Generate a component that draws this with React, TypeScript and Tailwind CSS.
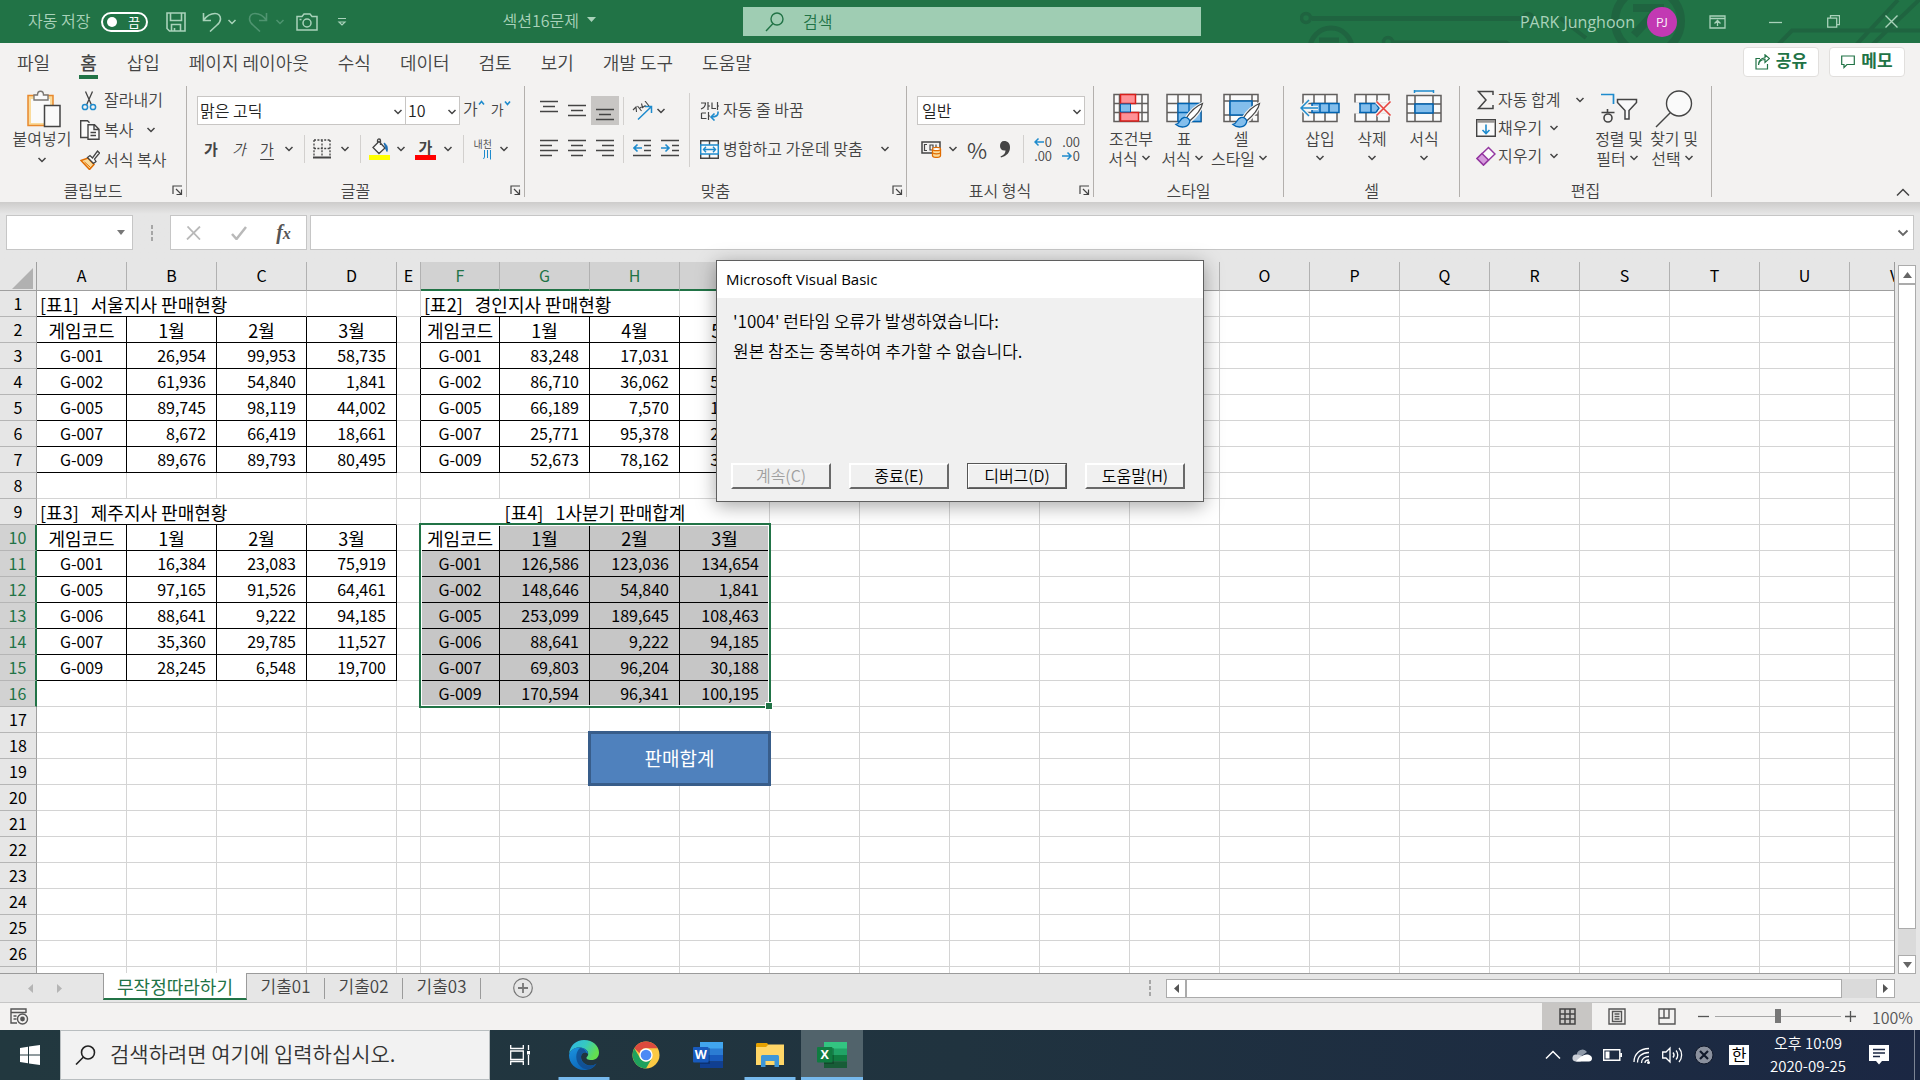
// Spreadsheet window with ribbon, worksheet, Visual Basic error dialog and the desktop taskbar.
import React from 'react';

type IconProps = { w: number; h: number; children: React.ReactNode; className?: string };

const Svg: React.FC<IconProps> = ({ w, h, children, className }) => (
  <svg
    width={w}
    height={h}
    viewBox={`0 0 ${w} ${h}`}
    fill="none"
    stroke="currentColor"
    className={`shrink-0 ${className ?? ''}`}
    aria-hidden="true"
  >
    {children}
  </svg>
);

const Chev: React.FC<{ className?: string }> = ({ className }) => (
  <Svg w={16} h={8} className={className}>
    <path d="M4.500 2l3.500 3.500L11.500 2" strokeWidth="1.5" />
  </Svg>
);

const DropBtn: React.FC<{ className?: string }> = ({ className }) => (
  <button type="button" aria-label="옵션" className={`h-6 w-4 flex items-center ${className ?? ''}`}>
    <Chev />
  </button>
);

const Sep: React.FC<{ className?: string }> = ({ className }) => (
  <span className={`w-px h-7 shrink-0 bg-[#d2d0ce] ${className ?? ''}`} />
);

/* Caption beside a small ribbon icon */
const Caption: React.FC<{ children: React.ReactNode }> = ({ children }) => <span className="pb-[3px]">{children}</span>;

/* ---------- Title bar ---------- */

const TitleBar: React.FC = () => (
  <header className="relative h-[43px] shrink-0 flex items-center bg-[#217346] text-[#a9d2ba] text-base overflow-hidden">
    <svg className="absolute right-0 top-0" width="620" height="43" fill="none" stroke="#1f6440" aria-hidden="true">
      <circle cx="6" cy="18" r="4.5" strokeWidth="3.5" />
      <path d="M12 18.5h212" strokeWidth="5" />
      <circle cx="228" cy="18" r="4.5" strokeWidth="3.5" />
      <circle cx="31" cy="49" r="21" strokeWidth="5" />
      <path d="M19 40h20" strokeWidth="5" />
      <circle cx="88" cy="42" r="4.5" strokeWidth="3.5" />
      <path d="M94 42.5h112l10 6M260 18l26 20" strokeWidth="4" />
      <circle cx="348" cy="21" r="33" strokeWidth="8" />
      <path d="M333 8h27v16M358 9l-24 26" strokeWidth="8" />
      <path d="M478 45l14-14.5h128M556 45l42-45M572 45l48-46" strokeWidth="4" />
    </svg>

    <div className="relative flex items-center w-[743px] shrink-0 pl-7">
      <span className="w-[73px] pb-1">자동 저장</span>
      <button
        type="button"
        role="switch"
        aria-checked="false"
        aria-label="자동 저장"
        className="w-[47px] h-5 rounded-full border-2 border-white flex items-center justify-between pl-1 pr-1.5 text-white text-[13px] leading-4 font-normal"
      >
        <span className="size-2.5 rounded-full bg-white" />끔
      </button>
      <button type="button" aria-label="저장" className="ml-[18px]">
        <Svg w={20} h={20}>
          <path d="M1 1h18v18H3.5L1 16.5zM4.500 1v7.500h11V1M5.500 19v-6.500h9V19M8.500 19v-3" strokeWidth="1.6" />
        </Svg>
      </button>
      <button type="button" aria-label="실행 취소" className="ml-4">
        <Svg w={20} h={20}>
          <path d="M1.5 1v7.5H9M1.8 8C5 3.500 9 1.500 13 1.500c3.500 0 5.500 2.500 5.500 5.500 0 2.500-1.500 4.500-4 6.500L8 19.500" strokeWidth="1.6" />
        </Svg>
      </button>
      <DropBtn className="ml-0.5" />
      <button type="button" aria-label="다시 실행" className="ml-2 text-[#4f9470]">
        <Svg w={20} h={20}>
          <path d="M18.5 1v7.5H11M18.2 8C15 3.500 11 1.500 7 1.500 3.500 1.500 1.500 4 1.500 7c0 2.500 1.500 4.500 4 6.500l6.500 6" strokeWidth="1.6" />
        </Svg>
      </button>
      <DropBtn className="ml-1 text-[#4f9470]" />
      <button type="button" aria-label="카메라" className="ml-2">
        <Svg w={22} h={18}>
          <path d="M1 3.500h5L8 1h6l2 2.500h5V17H1z" strokeWidth="1.5" />
          <circle cx="11" cy="10" r="4" strokeWidth="1.5" />
          <path d="M3.500 6.500h2" strokeWidth="1.5" />
        </Svg>
      </button>
      <button type="button" aria-label="빠른 실행 도구 모음" className="ml-[18px]">
        <Svg w={12} h={10}>
          <path d="M2 1.500h8M3 5l3 3 3-3z" strokeWidth="1.2" />
        </Svg>
      </button>
      <button type="button" className="ml-auto mr-[147px] flex items-center gap-2 pb-1">
        섹션16문제
        <Svg w={9} h={6}>
          <path d="M0 0h9L4.500 5z" fill="currentColor" stroke="none" />
        </Svg>
      </button>
    </div>

    <label className="relative flex items-center flex-1 max-w-[458px] h-[29px] bg-[#9fcdb3] text-[#217346] pl-[22px] gap-[18px]">
      <Svg w={20} h={20}>
        <circle cx="12" cy="7" r="6" strokeWidth="1.4" />
        <path d="M8 11.500L1 19" strokeWidth="1.4" />
      </Svg>
      <input
        type="text"
        placeholder="검색"
        aria-label="검색"
        className="w-full bg-transparent outline-none pb-0.5 placeholder:text-[#217346]"
      />
    </label>

    <div className="relative ml-auto flex items-center">
      <span className="[font-family:'Open_Sans',sans-serif] font-normal">PARK Junghoon</span>
      <span className="ml-3 mr-[11px] size-[30px] rounded-full bg-[#c239b3] text-white text-xs flex items-center justify-center">
        PJ
      </span>
      <button type="button" aria-label="리본 메뉴 표시 옵션" className="w-[58px] flex justify-center">
        <Svg w={17} h={14}>
          <path d="M1 1h15v12H1zM1 3.500h15M8.500 11V6M5.500 8.500l3-3 3 3" strokeWidth="1.3" />
        </Svg>
      </button>
      <button type="button" aria-label="최소화" className="w-[58px] flex justify-center">
        <Svg w={13} h={14}>
          <path d="M0 7.500h13" strokeWidth="1.3" />
        </Svg>
      </button>
      <button type="button" aria-label="이전 크기로 복원" className="w-[58px] flex justify-center">
        <Svg w={13} h={13}>
          <path d="M.7 3.200h9v9h-9zM3.500 3V.7h9v9H10" strokeWidth="1.3" />
        </Svg>
      </button>
      <button type="button" aria-label="닫기" className="w-[58px] flex justify-center">
        <Svg w={13} h={13}>
          <path d="M.5.5l12 12M12.500.5l-12 12" strokeWidth="1.4" />
        </Svg>
      </button>
    </div>
  </header>
);

/* ---------- Ribbon ---------- */

const MENU = ['파일', '홈', '삽입', '페이지 레이아웃', '수식', '데이터', '검토', '보기', '개발 도구', '도움말'];

const MenuRow: React.FC = () => (
  <nav className="flex items-start h-10 pl-[17px] pr-[15px] text-lg text-[#444]">
    <div className="flex gap-[29px] pt-[5px]">
      {MENU.map((m) => (
        <button
          key={m}
          type="button"
          className={`h-[31px] leading-[26px] border-b-4 whitespace-nowrap ${
            m === '홈' ? 'px-px border-[#217346] font-medium' : 'border-transparent'
          }`}
        >
          {m}
        </button>
      ))}
    </div>
    <div className="ml-auto flex gap-2.5 pt-1">
      <button type="button" className="flex items-center justify-center gap-1.5 w-[76px] h-[30px] bg-white border border-[#e1dfdd] rounded-sm text-[#217346] text-[17px] font-bold">
        <Svg w={15} h={16}>
          <path d="M5 4.500H1v10.500h11.500V10M3.500 11c.5-4 3-5.500 6.500-5.500v3l4.500-4L10 .8v3C6 4 3.500 7 3.500 11z" strokeWidth="1.2" />
        </Svg>
        <Caption>공유</Caption>
      </button>
      <button type="button" className="flex items-center justify-center gap-1.5 w-[76px] h-[30px] bg-white border border-[#e1dfdd] rounded-sm text-[#217346] text-[17px] font-bold">
        <Svg w={14} h={16}>
          <path d="M.7 2h12.600v8.500H6l-3 3v-3H.7z" strokeWidth="1.2" />
        </Svg>
        <Caption>메모</Caption>
      </button>
    </div>
  </nav>
);

type GroupProps = { label: string; className: string; launcher?: boolean; children: React.ReactNode };

const Group: React.FC<GroupProps> = ({ label, className, launcher, children }) => (
  <section className={`flex flex-col shrink-0 h-[111px] border-r border-[#b3b0ad] ${className}`}>
    <div className="flex h-[97px]">{children}</div>
    <div className="flex items-center h-3.5 leading-[14px]">
      <span className="w-3.5" />
      <span className="flex-1 text-center">{label}</span>
      <span className="w-3.5">
        {launcher && (
          <button type="button" aria-label={`${label} 설정`} className="block">
            <Svg w={11} h={10}>
              <path d="M1 9V1h9M4 4l5 5M9.500 4.500v5h-5" strokeWidth="1.2" />
            </Svg>
          </button>
        )}
      </span>
    </div>
  </section>
);

const BigButton: React.FC<{ icon: React.ReactNode; top: string; bottom?: string; className: string }> = ({
  icon,
  top,
  bottom,
  className,
}) => (
  <button type="button" className={`flex flex-col items-center pt-1 leading-5 whitespace-nowrap ${className}`}>
    <span className="h-[38px]">{icon}</span>
    <span>{top}</span>
    <span className="flex items-center h-5">
      {bottom}
      <Chev />
    </span>
  </button>
);

/* Grey cell grid shared by the table-like ribbon icons */
const GridBase: React.FC = () => (
  <path d="M3 4.500h34v27H3zM3 13.500h34M3 22.500h34M14 4.500v27M25 4.500v27" fill="#fafafa" stroke="#605e5c" strokeWidth="1.5" />
);

const Brush: React.FC = () => (
  <>
    <path d="M38.500 13.500c-5 2-12 8-17 15l4 3.500c6-5 12-12.500 13-18.500z" fill="#fff" stroke="#f3f2f1" strokeWidth="3" />
    <path d="M38.500 13.500c-5 2-12 8-16.500 15l3 3c6-5 12.500-12.500 13.500-18z" fill="#fff" stroke="#444" strokeWidth="1.3" />
    <path d="M12 34.500c4-.5 3.500-6 8-7 3.500-.5 6.500 2 5.500 5-1.500 5-9 6-13.500 2z" fill="#83beec" stroke="#0063b1" strokeWidth="1.3" />
  </>
);

const HLines: React.FC<{ rows: [number, number, number][] }> = ({ rows }) => (
  <Svg w={18} h={20}>
    {rows.map(([x1, x2, y]) => (
      <path key={y} d={`M${x1} ${y}.5H${x2}`} strokeWidth="1.5" />
    ))}
  </Svg>
);

const ClipboardGroup: React.FC = () => (
  <Group label="클립보드" className="w-[187px]" launcher>
    <button type="button" className="flex flex-col items-center ml-3 w-[60px] pt-1 leading-5 whitespace-nowrap">
      <Svg w={38} h={38}>
        <path d="M5 5.500h25v30H5z" fill="#fadb9b" stroke="#e8882c" strokeWidth="1.5" />
        <path d="M8 9h19v24H8z" fill="#fafafa" stroke="none" />
        <path d="M11 10V5h3.500c0-5 6-5 6 0H25v5z" fill="#fafafa" stroke="#797774" strokeWidth="1.4" />
        <path d="M21.500 15.500H37v21H21.500z" fill="#fafafa" stroke="#444" strokeWidth="1.5" />
      </Svg>
      <span>붙여넣기</span>
      <Chev className="mt-2" />
    </button>
    <div className="flex flex-col ml-2 whitespace-nowrap">
      <button type="button" className="flex items-center gap-1 h-[29px]">
        <Svg w={20} h={20}>
          <path d="M5.500.5l6 13.500M12.500.5l-6 13.500" strokeWidth="1.3" />
          <circle cx="5" cy="16" r="2.6" stroke="#1e8bcd" strokeWidth="1.5" />
          <circle cx="13" cy="16" r="2.6" stroke="#1e8bcd" strokeWidth="1.5" />
        </Svg>
        <Caption>잘라내기</Caption>
      </button>
      <button type="button" className="flex items-center gap-1 h-[30px]">
        <Svg w={20} h={20}>
          <path d="M7.500 17.500H.7V.7h6.800l2 2M8 4.700h6.500l4.500 4.500v10H8zM14 5v4.500h5M10.500 12.500H16M10.500 15.500H16" fill="#fafafa" strokeWidth="1.4" />
        </Svg>
        <Caption>복사</Caption>
        <Chev className="ml-1.5" />
      </button>
      <button type="button" className="flex items-center gap-1 h-[30px]">
        <Svg w={20} h={20}>
          <path d="M1 10.500L8 8l6 6.500-4.500 5z" fill="#fadb9b" stroke="#e06c00" strokeWidth="1.5" />
          <path d="M4.500 12l6 5.500" stroke="#e06c00" />
          <path d="M7.500 7.500l2.500-2 2.500 2.500L17.500 1l2 2-5 6 1.500 2.500-2.500 2z" fill="#fafafa" strokeWidth="1.3" />
        </Svg>
        <Caption>서식 복사</Caption>
      </button>
    </div>
  </Group>
);

const FontGroup: React.FC = () => (
  <Group label="글꼴" className="w-[338px]" launcher>
    <div className="pl-2.5 pt-2.5 flex flex-col gap-3">
      <div className="flex h-[29px]">
        <span className="relative w-[209px]">
          <select aria-label="글꼴" className="size-full appearance-none bg-white border border-[#c8c6c4] pl-0.5 pb-0.5 text-[#222]">
            <option>맑은 고딕</option>
          </select>
          <Chev className="absolute right-0 top-3 pointer-events-none" />
        </span>
        <span className="relative w-[55px] -ml-px">
          <select aria-label="글꼴 크기" className="size-full appearance-none bg-white border border-[#c8c6c4] pl-0.5 pb-0.5 text-[#222]">
            <option>10</option>
          </select>
          <Chev className="absolute right-0 top-3 pointer-events-none" />
        </span>
        <button type="button" aria-label="글꼴 크기 크게" className="flex items-start ml-[3px] text-base leading-6">
          가
          <Svg w={7} h={14}>
            <path d="M1 8.500l2.500-3 2.500 3" stroke="#1e8bcd" strokeWidth="1.6" />
          </Svg>
        </button>
        <button type="button" aria-label="글꼴 크기 작게" className="flex items-start ml-1.5 text-sm leading-[26px]">
          가
          <Svg w={7} h={14}>
            <path d="M1 5.500l2.500 3 2.500-3" stroke="#1e8bcd" strokeWidth="1.6" />
          </Svg>
        </button>
      </div>
      <div className="flex items-center h-6 text-[15px]">
        <button type="button" className="w-7 font-bold">가</button>
        <button type="button" className="w-7 italic">가</button>
        <button type="button" className="w-7 underline underline-offset-4">가</button>
        <DropBtn />
        <Sep className="ml-[7px]" />
        <button type="button" aria-label="테두리" className="ml-2">
          <Svg w={18} h={20}>
            <path d="M1 1h16M1 1v17M17 1v17M9 1v17M1 9.500h16" strokeWidth="1.3" strokeDasharray="2 1.4" />
            <path d="M0 18.500h18" strokeWidth="2" />
          </Svg>
        </button>
        <DropBtn className="ml-1.5" />
        <Sep className="ml-[7px]" />
        <button type="button" aria-label="채우기 색" className="ml-2">
          <Svg w={21} h={22}>
            <path d="M4 9.500l6-6 6 6.500-6 5.500zM8.500 6V2.500c0-2 3-2 3 0V7" fill="#fafafa" strokeWidth="1.3" />
            <path d="M15 5c3 1.500 4 4.500 3 8.500-1.500-2-1.500-5-3-8.500z" fill="#1e6fb5" stroke="#1e6fb5" />
            <path d="M0 19.500h21" stroke="#ffff00" strokeWidth="5" />
          </Svg>
        </button>
        <DropBtn className="ml-[3px]" />
        <button type="button" aria-label="글꼴 색" className="flex flex-col items-center w-[21px] ml-1.5 leading-[17px] font-bold">
          가
          <span className="w-full h-[5px] bg-[#ff0000]" />
        </button>
        <DropBtn className="ml-1" />
        <Sep className="ml-[7px]" />
        <button type="button" aria-label="윗주 필드" className="flex flex-col items-end w-5 ml-2 text-[10px] leading-[10px] whitespace-nowrap">
          내천
          <Svg w={9} h={11}>
            <path d="M1.500 1v7l-1 2M4.500 1v8M7.500 1v9.500" stroke="#1e8bcd" />
          </Svg>
        </button>
        <DropBtn className="ml-1" />
      </div>
    </div>
  </Group>
);

const AlignGroup: React.FC = () => (
  <Group label="맞춤" className="w-[382px]" launcher>
    <div className="pl-2.5 pt-2.5 flex flex-col gap-3">
      <div className="flex items-center h-[29px]">
        <button type="button" aria-label="위쪽 맞춤" className="w-7 h-full flex justify-center items-start pt-px">
          <HLines rows={[[0, 18, 4], [3, 15, 9], [0, 18, 14]]} />
        </button>
        <button type="button" aria-label="가운데 맞춤" className="w-7 h-full flex justify-center items-center">
          <HLines rows={[[0, 18, 4], [3, 15, 9], [0, 18, 14]]} />
        </button>
        <button type="button" aria-label="아래쪽 맞춤" aria-pressed="true" className="w-7 h-full flex justify-center items-end bg-[#c8c6c4]">
          <HLines rows={[[0, 18, 4], [3, 15, 9], [0, 18, 14]]} />
        </button>
        <Sep className="ml-1" />
        <button type="button" aria-label="방향" className="ml-2">
          <Svg w={21} h={20}>
            <path d="M6 18.500L19 6M13 5.500h6.500V12" stroke="#1e8bcd" strokeWidth="1.5" />
            <path d="M1 9l3-3 .5 5M5.500 5l4 5M7.500 7.500l2-1.500M9.500 2.500l1 4 3-2M13 0l4 5" strokeWidth="1.1" />
          </Svg>
        </button>
        <DropBtn />
      </div>
      <div className="flex items-center h-6">
        <button type="button" aria-label="왼쪽 맞춤" className="w-7 flex justify-center">
          <HLines rows={[[0, 18, 1], [0, 12, 6], [0, 18, 11], [0, 12, 16]]} />
        </button>
        <button type="button" aria-label="가로 가운데 맞춤" className="w-7 flex justify-center">
          <HLines rows={[[0, 18, 1], [3, 15, 6], [0, 18, 11], [3, 15, 16]]} />
        </button>
        <button type="button" aria-label="오른쪽 맞춤" className="w-7 flex justify-center">
          <HLines rows={[[0, 18, 1], [6, 18, 6], [0, 18, 11], [6, 18, 16]]} />
        </button>
        <Sep className="ml-1" />
        <button type="button" aria-label="내어쓰기" className="ml-1 w-7 flex justify-center">
          <Svg w={18} h={20}>
            <path d="M0 1.500h18M11 6.500h7M11 11.500h7M0 16.500h18" strokeWidth="1.5" />
            <path d="M1 9h8M4.500 5.500L1 9l3.500 3.500" stroke="#1e8bcd" strokeWidth="1.6" />
          </Svg>
        </button>
        <button type="button" aria-label="들여쓰기" className="w-7 flex justify-center">
          <Svg w={18} h={20}>
            <path d="M0 1.500h18M11 6.500h7M11 11.500h7M0 16.500h18" strokeWidth="1.5" />
            <path d="M0 9h8M4.500 5.500L8 9l-3.500 3.500" stroke="#1e8bcd" strokeWidth="1.6" />
          </Svg>
        </button>
      </div>
    </div>
    <span className="w-px h-[74px] mt-[7px] ml-[5px] bg-[#d2d0ce]" />
    <div className="pl-2.5 pt-2.5 flex flex-col gap-3 whitespace-nowrap">
      <button type="button" className="flex items-center gap-1 h-[29px]">
        <Svg w={19} h={20}>
          <path d="M1 2h4.500c0 3-1.500 5-4.500 6M8 1v8M8 5h2M12 1.500v6h4M17.500 1v8M19 5h-1.500M1.500 12v5.500h5M1.500 12H6M8.500 11v8M8.500 15H10" strokeWidth="1.2" />
          <path d="M18 10.500c.5 4-2 5.500-6.500 5.500M14.500 12.500L11 16l3.500 3.500" stroke="#1e8bcd" strokeWidth="1.6" />
        </Svg>
        <Caption>자동 줄 바꿈</Caption>
      </button>
      <div className="flex items-center h-6">
        <button type="button" className="flex items-center gap-1">
          <Svg w={19} h={19}>
            <path d="M.7.7h17.600v17.600H.7zM9.500.7v4M9.500 14v4" fill="#fafafa" strokeWidth="1.4" />
            <path d="M.7 5h17.600v9H.7z" fill="#fafafa" stroke="#1e8bcd" strokeWidth="1.5" />
            <path d="M3.500 9.500h12M6 6.800L3.500 9.500 6 12.200M13 6.800l2.500 2.700-2.500 2.700" stroke="#1e8bcd" strokeWidth="1.4" />
          </Svg>
          <Caption>병합하고 가운데 맞춤</Caption>
        </button>
        <DropBtn className="ml-3.5" />
      </div>
    </div>
  </Group>
);

const NumberGroup: React.FC = () => (
  <Group label="표시 형식" className="w-[187px]" launcher>
    <div className="pl-2.5 pt-2.5 flex flex-col gap-3">
      <span className="relative w-[168px] h-[29px]">
        <select aria-label="표시 형식" className="size-full appearance-none bg-white border border-[#c8c6c4] pl-1 pb-0.5 text-[#222]">
          <option>일반</option>
        </select>
        <Chev className="absolute right-0 top-3 pointer-events-none" />
      </span>
      <div className="flex items-center h-6">
        <button type="button" aria-label="회계 표시 형식" className="ml-1">
          <Svg w={21} h={18}>
            <path d="M1 2h18v11H1z" strokeWidth="1.5" />
            <path d="M6 4.500H3.500v6H6M9 5h3v5H9zM15 4.500v3" strokeWidth="1.2" />
            <path d="M11.500 9v6.500c0 2.500 8 2.500 8 0V9" fill="#fadb9b" stroke="#e06c00" strokeWidth="1.3" />
            <ellipse cx="15.5" cy="9" rx="4" ry="1.7" fill="#fff" stroke="#e06c00" strokeWidth="1.3" />
            <path d="M11.500 12.300c0 2 8 2 8 0" stroke="#e06c00" strokeWidth="1.2" />
          </Svg>
        </button>
        <DropBtn className="ml-[3px]" />
        <button type="button" aria-label="백분율 스타일" className="ml-1.5 w-5 text-[22px] leading-6">%</button>
        <button type="button" aria-label="쉼표 스타일" className="ml-3 w-3">
          <Svg w={12} h={18}>
            <path d="M5 1c4 0 6 2.500 6 6.500C11 12 8 16 2 17.500l-.5-1C5 15 6.500 13 6.500 10.500 3 11 1 9 1 6c0-3 1.500-5 4-5z" fill="currentColor" stroke="none" />
          </Svg>
        </button>
        <Sep className="ml-3" />
        <button type="button" aria-label="자릿수 늘림" className="ml-1.5 w-[22px] text-[13px] leading-[14px] text-right">
          <span className="flex items-center justify-end">
            <Svg w={11} h={10}>
              <path d="M1 5h9M4.500 1.500L1 5l3.500 3.500" stroke="#1e8bcd" strokeWidth="1.5" />
            </Svg>
            0
          </span>
          .00
        </button>
        <button type="button" aria-label="자릿수 줄임" className="ml-1.5 w-[22px] text-[13px] leading-[14px] text-right">
          .00
          <span className="flex items-center justify-end">
            <Svg w={11} h={10}>
              <path d="M0 5h9M5.500 1.500L9 5 5.500 8.500" stroke="#1e8bcd" strokeWidth="1.5" />
            </Svg>
            0
          </span>
        </button>
      </div>
    </div>
  </Group>
);

const StyleGroup: React.FC = () => (
  <Group label="스타일" className="w-[190px]">
    <BigButton
      className="ml-2.5 w-[54px]"
      top="조건부"
      bottom="서식"
      icon={
        <Svg w={40} h={38}>
          <path d="M3 4.500h34v27H3zM3 13.500h34M3 22.500h34M8.500 4.500v27M31 4.500v27" fill="#fafafa" stroke="#605e5c" strokeWidth="1.5" />
          <path d="M9.500 4.500h15v9h-15zM9.500 22.500h18V31h-18z" fill="#ff9196" stroke="#d8201c" strokeWidth="1.5" />
          <path d="M9.500 14h10v8h-10z" fill="#83beec" stroke="#0063b1" />
        </Svg>
      }
    />
    <BigButton
      className="w-[52px]"
      top="표"
      bottom="서식"
      icon={
        <Svg w={40} h={38}>
          <GridBase />
          <path d="M14 13.500h23v18H14zM25 13.500v18M14 22.500h23" fill="#83beec" stroke="#0063b1" strokeWidth="1.3" />
          <Brush />
        </Svg>
      }
    />
    <BigButton
      className="w-[62px]"
      top="셀"
      bottom="스타일"
      icon={
        <Svg w={40} h={38}>
          <path d="M3 4.500h34v27H3zM3 11h34M3 25h34M9 4.500v27M31 4.500v27" fill="#fafafa" stroke="#605e5c" strokeWidth="1.5" />
          <path d="M9 11h22v14H9z" fill="#83beec" stroke="#0063b1" strokeWidth="1.5" />
          <Brush />
        </Svg>
      }
    />
  </Group>
);

const CellGroup: React.FC = () => (
  <Group label="셀" className="w-[176px]">
    <BigButton
      className="ml-2.5 w-[52px]"
      top="삽입"
      icon={
        <Svg w={40} h={38}>
          <GridBase />
          <path d="M12 13.500h27v9H12zM20 13.500v9M29 13.500v9" fill="#83beec" stroke="#0063b1" strokeWidth="1.5" />
          <path d="M1 18h17M9 10l-8 8 8 8" stroke="#f3f2f1" strokeWidth="4" />
          <path d="M1 18h17M9 10l-8 8 8 8" stroke="#1e8bcd" strokeWidth="1.5" />
        </Svg>
      }
    />
    <BigButton
      className="w-[52px]"
      top="삭제"
      icon={
        <Svg w={40} h={38}>
          <GridBase />
          <path d="M1 12.500h6v11H1zM27 12.500h12v11H27z" fill="#f3f2f1" stroke="none" />
          <path d="M8 13.500h16l3 4.500-3 4.500H8zM19 13.500v9" fill="#83beec" stroke="#0063b1" strokeWidth="1.5" />
          <path d="M24.500 11.500l14 14M38.500 11.500l-14 14" stroke="#f3f2f1" strokeWidth="4" />
          <path d="M24.500 11.500l14 14M38.500 11.500l-14 14" stroke="#e8443f" strokeWidth="1.6" />
        </Svg>
      }
    />
    <BigButton
      className="w-[52px]"
      top="서식"
      icon={
        <Svg w={40} h={38}>
          <path d="M3 5.500h34v26H3zM3 14h34M3 23h34M11 5.500v26M29 5.500v26" fill="#fafafa" stroke="#605e5c" strokeWidth="1.5" />
          <path d="M11 14h18v9H11z" fill="#83beec" stroke="#0063b1" strokeWidth="1.5" />
          <path d="M10.500 1h19M10.500 0v3M29.500 0v3" stroke="#1e8bcd" strokeWidth="1.5" />
        </Svg>
      }
    />
  </Group>
);

const EditGroup: React.FC = () => (
  <Group label="편집" className="w-[252px]">
    <div className="flex flex-col ml-4 w-[115px] whitespace-nowrap">
      <button type="button" className="flex items-center h-7">
        <Svg w={20} h={20} className="mr-0.5">
          <path d="M17 5V1.500H2.500L10 10l-7.500 8.500H17V15" strokeWidth="1.5" />
        </Svg>
        <Caption>자동 합계</Caption>
        <Chev className="ml-3" />
      </button>
      <button type="button" className="flex items-center h-7">
        <Svg w={20} h={18} className="mr-0.5">
          <path d="M.7.7h18.600v16.600H.7z" fill="#fafafa" strokeWidth="1.4" />
          <path d="M1 2.500h18" strokeWidth="2.5" stroke="#979593" />
          <path d="M10 5.500v9M6.500 11l3.500 3.500 3.500-3.500" stroke="#1e8bcd" strokeWidth="1.6" />
        </Svg>
        <Caption>채우기</Caption>
        <Chev className="ml-1" />
      </button>
      <button type="button" className="flex items-center h-7">
        <Svg w={20} h={20} className="mr-0.5">
          <path d="M1 12.500L12.500 1.500 19 8 7.500 19z" fill="#fafafa" stroke="#9437a0" strokeWidth="1.5" />
          <path d="M1 12.500l5-5 6.500 6.500-5 5z" fill="#d59bdd" stroke="#9437a0" strokeWidth="1.5" />
        </Svg>
        <Caption>지우기</Caption>
        <Chev className="ml-1" />
      </button>
    </div>
    <BigButton
      className="w-[56px]"
      top="정렬 및"
      bottom="필터"
      icon={
        <Svg w={40} h={38}>
          <path d="M2 4.500h12.500V14" stroke="#1e8bcd" strokeWidth="1.7" />
          <path d="M8.500 19v3M2.500 22.500h13" strokeWidth="1.6" />
          <circle cx="9" cy="28" r="4" strokeWidth="1.6" />
          <path d="M18.500 9.500h19v3l-7.500 8V29h-4v-8.500l-7.500-8z" fill="#fafafa" strokeWidth="1.5" />
        </Svg>
      }
    />
    <BigButton
      className="w-[54px]"
      top="찾기 및"
      bottom="선택"
      icon={
        <Svg w={40} h={38}>
          <circle cx="25" cy="13.5" r="12.5" fill="#fafafa" strokeWidth="1.4" />
          <path d="M16.500 22.500L2 37" strokeWidth="1.5" />
        </Svg>
      }
    />
  </Group>
);

const Ribbon: React.FC = () => (
  <div className="shrink-0 h-[159px] bg-[#f3f2f1] text-[#444] text-base">
    <MenuRow />
    <div className="flex pt-[3px]">
      <ClipboardGroup />
      <FontGroup />
      <AlignGroup />
      <NumberGroup />
      <StyleGroup />
      <CellGroup />
      <EditGroup />
      <button type="button" aria-label="리본 메뉴 축소" className="ml-auto mr-2.5 self-end">
        <Svg w={14} h={9}>
          <path d="M1 7.500l6-6 6 6" strokeWidth="1.5" />
        </Svg>
      </button>
    </div>
  </div>
);

/* ---------- Formula bar ---------- */

const Dots: React.FC = () => (
  <Svg w={4} h={16} className="text-[#a6a6a6]">
    <path d="M2 0v4M2 6v4M2 12v4" strokeWidth="2" />
  </Svg>
);

const FormulaBar: React.FC = () => (
  <div className="shrink-0 h-[60px] flex pt-[13px] px-1.5 bg-linear-to-b from-[#cdcccb] to-[#e6e6e6] to-20%">
    <div className="flex items-center w-[127px] h-[35px] bg-white border border-[#c6c6c6]">
      <input type="text" aria-label="이름 상자" className="w-full h-full outline-none px-2" />
      <Svg w={8} h={5} className="mr-[7px] text-[#777]">
        <path d="M0 0h8L4 5z" fill="currentColor" stroke="none" />
      </Svg>
    </div>
    <span className="w-[37px] h-[35px] flex items-center justify-center">
      <Dots />
    </span>
    <div className="flex items-center w-[137px] h-[35px] bg-white border border-[#c6c6c6] text-[#b9b9b9]">
      <button type="button" aria-label="취소" className="flex-1 flex justify-center">
        <Svg w={16} h={14}>
          <path d="M1.500.5L14 13.500M14 .5L1 13.500" strokeWidth="1.8" />
        </Svg>
      </button>
      <button type="button" aria-label="입력" className="flex-1 flex justify-center">
        <Svg w={16} h={14}>
          <path d="M1 8l4.500 5L15 1" strokeWidth="2.5" />
        </Svg>
      </button>
      <button type="button" aria-label="함수 삽입" className="flex-1 text-[#555] italic font-bold text-xl leading-6 [font-family:'Liberation_Serif',serif]">
        f<span className="text-base">x</span>
      </button>
    </div>
    <div className="flex items-center flex-1 ml-[3px] h-[35px] bg-white border border-[#c6c6c6] text-[#666]">
      <input type="text" aria-label="수식 입력줄" className="w-full h-full outline-none px-2" />
      <Svg w={12} h={8} className="mr-1">
        <path d="M1.500 1.500L6 6l4.500-4.500" strokeWidth="1.8" />
      </Svg>
    </div>
  </div>
);

/* ---------- Worksheet ---------- */

const COLS = 'ABCDEFGHIJKLMNOPQRSTUV'.split('');
const ROWS = Array.from({ length: 27 }, (_, i) => i + 1);

const RANGES = [
  { col: 0, row: 2, data: [
    ['게임코드', '1월', '2월', '3월'],
    ['G-001', '26,954', '99,953', '58,735'],
    ['G-002', '61,936', '54,840', '1,841'],
    ['G-005', '89,745', '98,119', '44,002'],
    ['G-007', '8,672', '66,419', '18,661'],
    ['G-009', '89,676', '89,793', '80,495'],
  ] },
  { col: 5, row: 2, data: [
    ['게임코드', '1월', '4월', '5월'],
    ['G-001', '83,248', '17,031', '9,140'],
    ['G-002', '86,710', '36,062', '54,210'],
    ['G-005', '66,189', '7,570', '10,344'],
    ['G-007', '25,771', '95,378', '26,850'],
    ['G-009', '52,673', '78,162', '30,476'],
  ] },
  { col: 0, row: 10, data: [
    ['게임코드', '1월', '2월', '3월'],
    ['G-001', '16,384', '23,083', '75,919'],
    ['G-005', '97,165', '91,526', '64,461'],
    ['G-006', '88,641', '9,222', '94,185'],
    ['G-007', '35,360', '29,785', '11,527'],
    ['G-009', '28,245', '6,548', '19,700'],
  ] },
  { col: 5, row: 10, data: [
    ['게임코드', '1월', '2월', '3월'],
    ['G-001', '126,586', '123,036', '134,654'],
    ['G-002', '148,646', '54,840', '1,841'],
    ['G-005', '253,099', '189,645', '108,463'],
    ['G-006', '88,641', '9,222', '94,185'],
    ['G-007', '69,803', '96,204', '30,188'],
    ['G-009', '170,594', '96,341', '100,195'],
  ] },
];

const TITLES: Record<string, { text: string; span: number; center?: boolean }> = {
  A1: { text: '[표1]   서울지사 판매현황', span: 3 },
  F1: { text: '[표2]   경인지사 판매현황', span: 3 },
  A9: { text: '[표3]   제주지사 판매현황', span: 3 },
  F9: { text: '[표4]   1사분기 판매합계', span: 4, center: true },
};

const valueAt = (col: number, row: number): string | undefined => {
  for (const r of RANGES) {
    const v = r.data[row - r.row]?.[col - r.col];
    if (v) return v;
  }
  return undefined;
};

const inSelection = (col: number, row: number) => col >= 5 && col <= 8 && row >= 10 && row <= 16;

const GridRow: React.FC<{ row: number }> = ({ row }) => {
  const cells: React.ReactNode[] = [];
  for (let c = 0; c < COLS.length; c++) {
    const title = TITLES[COLS[c] + row];
    const span = title?.span ?? 1;
    const last = c + span - 1;
    const value = valueAt(c, row);
    const right = value || valueAt(last + 1, row) ? 'border-r-black' : 'border-r-[#d4d4d4]';
    const bottom = value || valueAt(c, row + 1) ? 'border-b-black' : 'border-b-[#d4d4d4]';
    const numeric = value !== undefined && /^[\d,]+$/.test(value);
    const code = value !== undefined && value.startsWith('G-');
    const fill = inSelection(c, row) && !(c === 5 && row === 10) ? 'bg-[#c6c6c6]' : '';
    cells.push(
      <td
        key={c}
        colSpan={span}
        className={`h-[26px] p-0 border-r border-b whitespace-pre overflow-hidden ${right} ${bottom} ${fill} ${
          numeric ? 'text-right pr-2.5 text-base leading-[25px]' : ''
        } ${code ? 'text-center text-base leading-[25px]' : ''} ${
          !numeric && !code ? 'text-lg leading-[24px]' : ''
        } ${title && !title.center ? 'pl-[3px]' : 'text-center'}`}
      >
        {title?.text ?? value}
      </td>
    );
    c = last;
  }
  const active = row >= 10 && row <= 16;
  return (
    <tr>
      <th
        scope="row"
        className={`h-[26px] p-0 border-b text-base leading-[25px] font-normal ${
          active
            ? 'bg-[#d2d2d2] border-b-[#b5b5b5] text-[#217346] border-r-2 border-r-[#217346]'
            : 'bg-[#e6e6e6] border-b-[#b5b5b5] border-r border-r-[#9f9f9f]'
        }`}
      >
        {row < 27 ? row : null}
      </th>
      {cells}
    </tr>
  );
};

const colWidth = (name: string) => {
  if (name === 'E') return 'w-[24px]';
  if (name === 'F') return 'w-[79px]';
  return 'w-[90px]';
};

const Worksheet: React.FC = () => (
  <div className="flex flex-1 min-h-0 bg-[#e6e6e6] font-normal">
    <main className="relative flex-1 min-w-0 overflow-hidden border-r border-b border-[#9b9b9b] text-black">
      <table className="table-fixed w-[1940px] border-separate border-spacing-0 bg-white">
        <colgroup>
          <col className="w-[37px]" />
          {COLS.map((c) => (
            <col key={c} className={colWidth(c)} />
          ))}
        </colgroup>
        <thead>
          <tr>
            <th aria-label="모두 선택" className="h-[29px] p-0 bg-[#e6e6e6] border-r border-b border-[#9f9f9f]">
              <Svg w={21} h={21} className="ml-3 mt-1">
                <path d="M21 0v21H0z" fill="#b1b1b1" stroke="none" />
              </Svg>
            </th>
            {COLS.map((c, i) => (
              <th
                key={c}
                scope="col"
                className={`h-[29px] p-0 pb-0.5 text-base leading-6 font-normal border-r border-r-[#b1b1b1] ${
                  i >= 5 && i <= 8
                    ? 'bg-[#d2d2d2] text-[#217346] border-b-2 border-b-[#217346]'
                    : 'bg-[#e6e6e6] border-b border-b-[#9f9f9f]'
                }`}
              >
                {c}
              </th>
            ))}
          </tr>
        </thead>
        <tbody>
          {ROWS.map((r) => (
            <GridRow key={r} row={r} />
          ))}
        </tbody>
      </table>

      {/* Selection frame around F10:I16 */}
      <div className="absolute left-[419px] top-[261px] w-[352px] h-[185px] border-2 border-[#217346] pointer-events-none">
        <div className="size-full border border-white" />
        <span className="absolute -right-[3px] -bottom-[3px] size-[6px] bg-[#217346] outline outline-white" />
      </div>

      {/* Macro button placed over H18:I19 */}
      <button
        type="button"
        className="absolute left-[588px] top-[469px] w-[183px] h-[55px] bg-[#4f81bd] border-[3px] border-[#385d8a] text-white text-[19px]"
      >
        판매합계
      </button>
    </main>

    <div className="w-[25px] pl-[3px] pr-1 pt-[3px] flex flex-col text-[#666]">
      <button type="button" aria-label="위로 스크롤" className="h-[19px] bg-white border border-[#ababab] flex items-center justify-center">
        <Svg w={9} h={6}>
          <path d="M0 6h9L4.500 0z" fill="currentColor" stroke="none" />
        </Svg>
      </button>
      <div className="flex-1 bg-[#dadada] pb-[26px]">
        <div className="h-full bg-white border border-[#ababab]" />
      </div>
      <button type="button" aria-label="아래로 스크롤" className="h-[19px] bg-white border border-[#ababab] flex items-center justify-center">
        <Svg w={9} h={6}>
          <path d="M0 0h9L4.500 6z" fill="currentColor" stroke="none" />
        </Svg>
      </button>
    </div>
  </div>
);

/* ---------- Sheet tabs and status bar ---------- */

const SheetTabs: React.FC = () => (
  <div className="shrink-0 h-[29px] flex items-start bg-[#e6e6e6] border-b border-[#c6c6c6] text-[#444]">
    <div className="flex items-center gap-6 w-[103px] h-7 pl-7 text-[#b5b5b5]">
      <Svg w={5} h={9}>
        <path d="M5 0v9L0 4.500z" fill="currentColor" stroke="none" />
      </Svg>
      <Svg w={5} h={9}>
        <path d="M0 0v9l5-4.500z" fill="currentColor" stroke="none" />
      </Svg>
    </div>
    <button type="button" className="relative w-[144px] h-[27px] -mt-px bg-white border-x border-[#9b9b9b] border-b-2 border-b-[#217346] text-[#217346] text-lg leading-[22px] font-normal">
      무작정따라하기
    </button>
    {['기출01', '기출02', '기출03'].map((t) => (
      <button key={t} type="button" className="w-[78px] h-[21px] mt-1 border-r border-[#9b9b9b] text-[17px] leading-[16px] flex justify-center">
        {t}
      </button>
    ))}
    <button type="button" aria-label="새 시트" className="ml-8 mt-1">
      <Svg w={20} h={20} className="text-[#777]">
        <circle cx="10" cy="10" r="9.3" strokeWidth="1.2" />
        <path d="M10 5v10M5 10h10" strokeWidth="1.8" />
      </Svg>
    </button>
    <div className="ml-auto mr-[25px] flex items-center h-7 text-[#555]">
      <Dots />
      <button type="button" aria-label="왼쪽으로 스크롤" className="ml-3.5 w-5 h-[19px] bg-white border border-[#ababab] flex items-center justify-center">
        <Svg w={5} h={9}>
          <path d="M5 0v9L0 4.500z" fill="currentColor" stroke="none" />
        </Svg>
      </button>
      <div className="w-[690px] h-[19px] bg-[#dadada] pr-[34px]">
        <div className="h-full bg-white border border-[#ababab]" />
      </div>
      <button type="button" aria-label="오른쪽으로 스크롤" className="w-[19px] h-[19px] bg-white border border-[#ababab] flex items-center justify-center">
        <Svg w={5} h={9}>
          <path d="M0 0v9l5-4.500z" fill="currentColor" stroke="none" />
        </Svg>
      </button>
    </div>
  </div>
);

const StatusBar: React.FC = () => (
  <div className="shrink-0 h-[27px] flex items-center bg-[#f3f2f1] text-[#555] text-base">
    <button type="button" aria-label="매크로 기록" className="ml-2.5">
      <Svg w={19} h={17}>
        <path d="M7 15H1V1h15v4M1 4.500h15M3.500 8h3M3.500 11h3" strokeWidth="1.4" />
        <circle cx="12.5" cy="11" r="5" strokeWidth="1.4" />
        <circle cx="12.5" cy="11" r="2.4" fill="currentColor" stroke="none" />
      </Svg>
    </button>
    <div className="ml-auto flex items-center h-full">
      <button type="button" aria-label="기본" aria-pressed="true" className="w-[50px] h-full bg-[#c8c6c4] flex items-center justify-center text-[#444]">
        <Svg w={17} h={17}>
          <path d="M1 1h15v15H1zM1 6h15M1 11h15M6 1v15M11 1v15" strokeWidth="1.5" />
        </Svg>
      </button>
      <button type="button" aria-label="페이지 레이아웃" className="w-[50px] flex justify-center">
        <Svg w={18} h={17}>
          <path d="M1 1h16v15H1zM4.500 3.500h9v10h-9zM6.500 6h5M6.500 8.500h5M6.500 11h5" strokeWidth="1.4" />
        </Svg>
      </button>
      <button type="button" aria-label="페이지 나누기 미리 보기" className="w-[50px] flex justify-center">
        <Svg w={18} h={17}>
          <path d="M1 1h16v15H1zM1 10h10V1M6 1v9" strokeWidth="1.4" />
        </Svg>
      </button>
      <button type="button" aria-label="축소" className="ml-1.5">
        <Svg w={11} h={11}>
          <path d="M0 5.500h11" strokeWidth="1.3" />
        </Svg>
      </button>
      <input
        type="range"
        aria-label="확대/축소"
        min={0}
        max={200}
        defaultValue={100}
        className="ml-1.5 w-[126px] h-4 appearance-none bg-transparent [&::-webkit-slider-runnable-track]:h-px [&::-webkit-slider-runnable-track]:bg-[#a6a6a6] [&::-webkit-slider-thumb]:appearance-none [&::-webkit-slider-thumb]:w-1.5 [&::-webkit-slider-thumb]:h-3.5 [&::-webkit-slider-thumb]:-mt-[7px] [&::-webkit-slider-thumb]:bg-[#777]"
      />
      <button type="button" aria-label="확대" className="ml-1">
        <Svg w={11} h={11}>
          <path d="M0 5.500h11M5.500 0v11" strokeWidth="1.3" />
        </Svg>
      </button>
      <button type="button" className="ml-4 w-12 text-left">100%</button>
    </div>
  </div>
);

/* ---------- Visual Basic error dialog ---------- */

const BTN = 'w-[100px] h-[26px] text-base leading-5 pb-0.5 bg-[#f0f0f0] border-t-white border-l-white border-r-[#696969] border-b-[#696969]';

const ErrorDialog: React.FC = () => (
  <div
    role="dialog"
    aria-labelledby="vb-title"
    className="absolute left-1/2 -translate-x-1/2 top-[260px] w-[488px] h-[242px] flex flex-col bg-[#f0f0f0] border border-[#5f5f5f] shadow-[0_4px_18px_rgba(0,0,0,0.35)] text-black"
  >
    <h2 id="vb-title" className="h-[37px] leading-[36px] pl-[9px] bg-white text-[15px] font-normal [font-family:'Open_Sans',sans-serif]">
      Microsoft Visual Basic
    </h2>
    <div className="flex-1 pl-4 pt-2 text-[17px] leading-[30px]">
      <p>'1004' 런타임 오류가 발생하였습니다:</p>
      <p>원본 참조는 중복하여 추가할 수 없습니다.</p>
    </div>
    <div className="flex gap-[18px] pl-3.5 pb-3">
      <button type="button" disabled className={`${BTN} border-2 text-[#a0a0a0]`}>계속(C)</button>
      <button type="button" className={`${BTN} border-2`}>종료(E)</button>
      <button type="button" className={`${BTN} border-2 outline -outline-offset-1 outline-[#555]`}>디버그(D)</button>
      <button type="button" className={`${BTN} border-2`}>도움말(H)</button>
    </div>
  </div>
);

/* ---------- Taskbar ---------- */

const EdgeLogo: React.FC = () => (
  <svg width="30" height="30" viewBox="0 0 30 30" aria-hidden="true">
    <defs>
      <linearGradient id="edge-top" x1="0" y1="0" x2="1" y2="0.4">
        <stop offset="0" stopColor="#2fb5e8" />
        <stop offset="0.55" stopColor="#36c9c0" />
        <stop offset="1" stopColor="#63e04f" />
      </linearGradient>
      <linearGradient id="edge-low" x1="0" y1="0" x2="0.6" y2="1">
        <stop offset="0" stopColor="#1b93e0" />
        <stop offset="1" stopColor="#0b63b5" />
      </linearGradient>
    </defs>
    <path d="M0 14C1 5.500 7 0 15 0c9 0 15 6 15 12.500 0 5-3.500 7.500-7.500 7.500-4 0-5.500-1.500-5-2.500 1.500-1.500 2-3 1.500-5C18 9 14 7.500 10 7.500 5.500 7.500 2 10 0 14z" fill="url(#edge-top)" />
    <path d="M0 15C1 10 5.500 7.500 10 7.500c5 0 9 2.500 9 6.500-1-2-5-2.500-6.500.5-2 5 2.500 11 9 11 2.500 0 4.500-1 6-2C25 28 20.500 30 15 30 6 30 0 23 0 15z" fill="url(#edge-low)" />
    <path d="M11 8c-5 4.500-5 13 0 18 2.500 2.500 6 4 9 3 3.500-1 6-3.500 7.500-5.500-2 1-4 2-6.500 2-6.500 0-10.500-6-8.500-11 1-2 3-2.500 5-1.500-1-3.500-3-5-6.500-5z" fill="#114a8b" opacity="0.8" />
  </svg>
);

const ChromeLogo: React.FC = () => (
  <svg width="28" height="28" viewBox="0 0 28 28" aria-hidden="true">
    <circle cx="14" cy="14" r="13.5" fill="#fbc943" />
    <path d="M2.300 7.300A13.500 13.500 0 0 1 25.700 7.300H14a6.700 6.700 0 0 0-6.500 5z" fill="#dd4b3e" />
    <path d="M2.300 7.300A13.500 13.500 0 0 0 14 27.500l5.800-10.200c-3 4.500-9.500 4-11.600 0z" fill="#1fa15d" />
    <circle cx="14" cy="14" r="6.7" fill="#fff" />
    <circle cx="14" cy="14" r="5.3" fill="#4c8bf5" />
  </svg>
);

type OfficeProps = { letter: string; bands: [string, string, string, string]; tile: string };

const OfficeLogo: React.FC<OfficeProps> = ({ letter, bands, tile }) => (
  <svg width="30" height="26" viewBox="0 0 30 26" aria-hidden="true">
    <rect x="7" width="23" height="7" fill={bands[0]} />
    <rect x="7" y="6.5" width="23" height="6.5" fill={bands[1]} />
    <rect x="7" y="13" width="23" height="6.5" fill={bands[2]} />
    <rect x="7" y="19.5" width="23" height="6.5" fill={bands[3]} />
    <rect x="7" y="6" width="10" height="16" fill="#000" opacity="0.2" />
    <rect y="5" width="15.5" height="15.5" rx="1" fill={tile} />
    <text x="7.7" y="17.2" textAnchor="middle" fontSize="12.5" fontWeight="700" fill="#fff" className="[font-family:'Open_Sans',sans-serif]">
      {letter}
    </text>
  </svg>
);

const FolderLogo: React.FC = () => (
  <svg width="28" height="24" viewBox="0 0 28 24" aria-hidden="true">
    <path d="M0 1.500C0 .5.500 0 1.500 0H11l2 2.500V5H0z" fill="#e5a100" />
    <path d="M0 4h10l2.500-2.500H28V22H0z" fill="#ffd667" />
    <path d="M5 24V14c0-1.500.5-2 2-2h14c1.500 0 2 .5 2 2v10h-4.500v-6h-9v6z" fill="#3e97d8" />
  </svg>
);

const APPS = [
  { name: 'Edge', icon: <EdgeLogo />, bar: 'w-[51px]', box: '' },
  { name: 'Chrome', icon: <ChromeLogo />, bar: 'w-0', box: '' },
  { name: 'Word', icon: <OfficeLogo letter="W" tile="#185abd" bands={['#41a5ee', '#2b7cd3', '#185abd', '#103f91']} />, bar: 'w-0', box: '' },
  { name: '파일 탐색기', icon: <FolderLogo />, bar: 'w-[51px]', box: '' },
  { name: 'Excel', icon: <OfficeLogo letter="X" tile="#107c41" bands={['#33c481', '#21a366', '#107c41', '#185c37']} />, bar: 'w-full', box: 'bg-[#51636b]' },
];

const Taskbar: React.FC = () => (
  <footer className="shrink-0 h-[50px] flex items-stretch bg-linear-to-r from-[#22383f] via-[#20333f] to-[#1b2743] text-white">
    <button type="button" aria-label="시작" className="w-[60px] flex items-center justify-center">
      <Svg w={20} h={20}>
        <path d="M0 3l8-1.200V9.500H0zM9 1.600L20 0v9.500H9zM0 10.500h8v7.700L0 17zM9 10.500h11V20L9 18.400z" fill="#fff" stroke="none" />
      </Svg>
    </button>
    <label className="flex items-center gap-3.5 w-[430px] pl-3.5 bg-[#f2f2f2] border border-[#b9bec0] text-[#222]">
      <Svg w={21} h={20}>
        <circle cx="13" cy="7.5" r="6.5" strokeWidth="1.6" />
        <path d="M8.500 12L1 19.500" strokeWidth="1.6" />
      </Svg>
      <input
        type="text"
        aria-label="작업 표시줄 검색"
        placeholder="검색하려면 여기에 입력하십시오."
        className="flex-1 bg-transparent outline-none pb-0.5 text-[21px] placeholder:text-[#333]"
      />
    </label>
    <button type="button" aria-label="작업 보기" className="w-[60px] flex items-center justify-center mr-[3px]">
      <Svg w={20} h={20}>
        <path d="M.7 0v3.500h12.600V0M.7 6h12.600v8.500H.7zM.7 20v-3.500h12.600V20M18.500 0v5M18.500 10v10" strokeWidth="1.3" />
        <path d="M17 6h3v3.500h-3z" fill="#fff" stroke="none" />
      </Svg>
    </button>
    {APPS.map((a) => (
      <button key={a.name} type="button" aria-label={a.name} className={`relative w-[62px] flex items-center justify-center ${a.box}`}>
        {a.icon}
        <span className={`absolute bottom-0 left-1/2 -translate-x-1/2 h-[3px] bg-[#76b9ed] ${a.bar}`} />
      </button>
    ))}

    <div className="ml-auto flex items-center gap-[11px]">
      <Svg w={16} h={10}>
        <path d="M1 8.500l7-7 7 7" strokeWidth="1.5" />
      </Svg>
      <Svg w={20} h={14}>
        <path d="M5 8a5.500 5.500 0 0 1 10-4l-8 6z" fill="#8e99a8" stroke="none" />
        <path d="M3.500 13.500a3.500 3.500 0 0 1 1-7c3 0 5 1 7 3l-3 4z" fill="#c9ced6" stroke="none" />
        <path d="M4 13.500c1-2 7-7 10.500-7 3.500 0 5.500 2 5.500 4 0 1.800-1.500 3-3 3z" fill="#fff" stroke="none" />
      </Svg>
      <Svg w={19} h={12}>
        <path d="M.7.7h16.100v10.600H.7zM18.300 4v4" strokeWidth="1.4" />
        <path d="M2.500 2.500h4v7h-4z" fill="#fff" stroke="none" />
      </Svg>
      <Svg w={18} h={17}>
        <path d="M1 15C1 7 7 1.500 16 1.500M4.500 15.500C4.500 9.500 9 5.500 16 5.500M8.500 16c0-4 3-6.500 7.500-6.500M12 16c0-1.500 1.500-3 4-3" strokeWidth="1.3" />
        <circle cx="15.5" cy="15.5" r="1.5" fill="#fff" stroke="none" />
      </Svg>
      <Svg w={21} h={18}>
        <path d="M.7 6v6H4l4 4V2L4 6zM11 6.500c1.300 1.500 1.300 3.500 0 5M14 4.500c2.300 2.500 2.300 6.500 0 9M17 2c3.500 4 3.500 10 0 14" strokeWidth="1.3" />
      </Svg>
      <Svg w={20} h={20}>
        <circle cx="10" cy="10" r="9" fill="#8b919e" stroke="#11192a" />
        <path d="M6 6l8 8M14 6l-8 8" stroke="#11192a" strokeWidth="2.2" />
      </Svg>
      <span className="ml-1 size-5 bg-white text-black text-base leading-[18px] text-center font-normal">한</span>
      <div className="ml-2 w-[80px] text-center text-[15px] leading-[23px] pb-0.5">
        <p>오후 10:09</p>
        <p>2020-09-25</p>
      </div>
      <button type="button" aria-label="알림" className="ml-2.5 mr-3.5">
        <Svg w={20} h={20}>
          <path d="M0 0h20v16h-7l-3 3.500L7 16H0z" fill="#fff" stroke="none" />
          <path d="M4 4.500h12M4 8h12M4 11.500h7" stroke="#1b2743" strokeWidth="1.3" />
        </Svg>
      </button>
      <span className="w-px h-full mr-[5px] bg-[#7c8494]" />
    </div>
  </footer>
);

const App: React.FC = () => {
  return (
    <div className="relative h-screen min-w-0 flex flex-col overflow-hidden bg-[#e6e6e6] font-[350] [font-family:'Noto_Sans_CJK_KR',sans-serif]">
      <TitleBar />
      <Ribbon />
      <FormulaBar />
      <Worksheet />
      <SheetTabs />
      <StatusBar />
      <Taskbar />
      <ErrorDialog />
    </div>
  );
};

export default App;
